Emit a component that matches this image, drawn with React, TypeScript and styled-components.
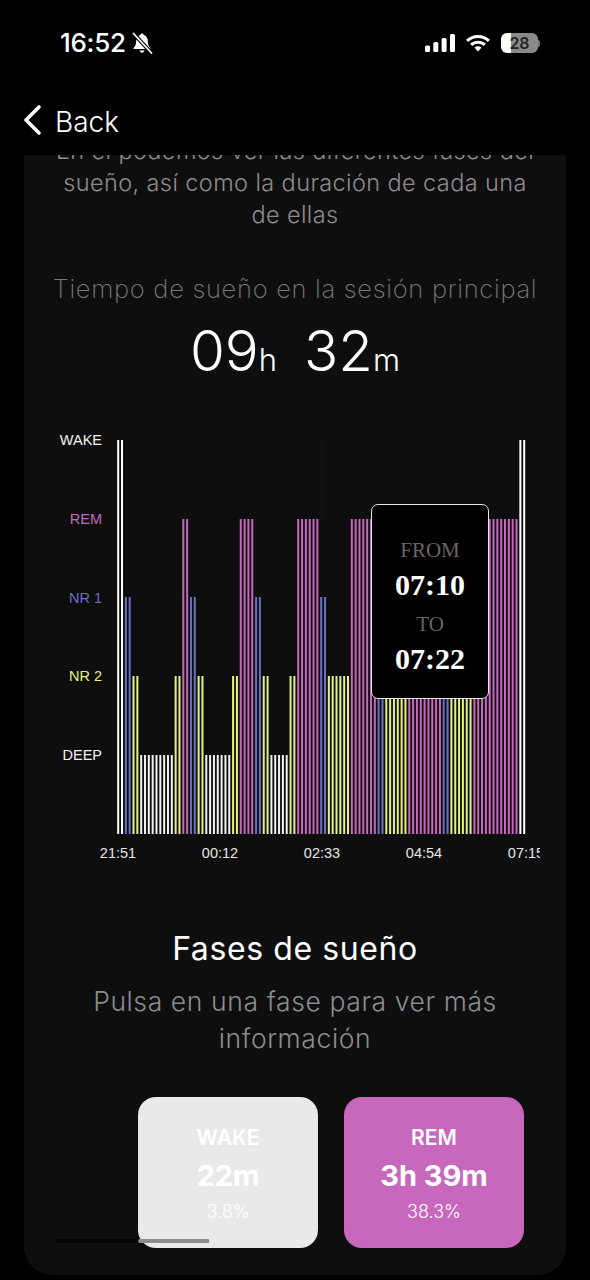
import React from 'react';
import styled, { createGlobalStyle } from 'styled-components';

const GlobalStyle = createGlobalStyle`
  html, body {
    margin: 0;
    padding: 0;
    background: #000;
  }
  body {
    font-family: Inter, "Noto Sans", sans-serif;
  }
`;

const Screen = styled.div`
  width: 590px;
  height: 1280px;
  background: #000;
  overflow: hidden;
  display: flex;
  flex-direction: column;
`;

const StatusBar = styled.div`
  height: 87px;
  flex: none;
  display: flex;
  justify-content: space-between;
  align-items: flex-start;
  padding: 27px 50px 0 60px;
  box-sizing: border-box;
  color: #fff;
`;

const Clock = styled.div`
  display: flex;
  align-items: center;
  gap: 4px;
  font-size: 26px;
  line-height: 32px;
  font-weight: 500;
  letter-spacing: -0.3px;
`;

const StatusIcons = styled.div`
  display: flex;
  align-items: center;
  gap: 10px;
  height: 32px;
`;

const Battery = styled.div`
  position: relative;
  width: 37px;
  height: 20px;
  border-radius: 6px;
  overflow: hidden;
  background: linear-gradient(to right, #fff 0 26%, #8a8a8a 26% 100%);
  color: #222;
  font-size: 16px;
  font-weight: 600;
  line-height: 20px;
  text-align: center;
`;

const BatteryTip = styled.div`
  width: 2px;
  height: 7px;
  margin-left: -10px;
  border-radius: 0 2px 2px 0;
  background: #777;
`;

const BackBar = styled.div`
  height: 68px;
  flex: none;
  display: flex;
  align-items: flex-start;
  gap: 12px;
  padding: 17px 0 0 23px;
  box-sizing: border-box;
  color: #fff;
  font-size: 28px;
  font-weight: 300;
  line-height: 36px;
`;

const Panel = styled.div`
  height: 1120px;
  flex: none;
  margin: 0 24px;
  background: #0e0e0f;
  border-radius: 0 0 28px 28px;
  overflow: hidden;
  position: relative;
`;

const Intro = styled.p`
  margin: -20px 0 0;
  padding: 0 24px;
  text-align: center;
  color: #8c8c8e;
  font-size: 23.5px;
  line-height: 32px;
  font-weight: 300;
  letter-spacing: 0.4px;
`;

const SessionTitle = styled.h2`
  margin: 42px 0 0;
  text-align: center;
  color: #7a7a7c;
  font-size: 25.5px;
  line-height: 32px;
  font-weight: 200;
  letter-spacing: 0.7px;
  white-space: nowrap;
`;

const Duration = styled.div`
  margin-top: 15px;
  display: flex;
  justify-content: center;
  align-items: baseline;
  gap: 27px;
  color: #fff;
  font-size: 56.5px;
  line-height: 62px;
  font-weight: 300;
`;

const Unit = styled.span`
  font-size: 31px;
`;

const ChartArea = styled.div`
  margin-top: 49px;
  display: grid;
  grid-template-columns: 78px 423px;
  column-gap: 15px;
`;

const YAxis = styled.div`
  height: 333px;
  margin-top: -9px;
  display: flex;
  flex-direction: column;
  justify-content: space-between;
  align-items: flex-end;
`;

const AxisLabel = styled.span<{ $color: string }>`
  color: ${(p) => p.$color};
  font-family: "Liberation Sans", Arial, sans-serif;
  font-size: 14.5px;
  line-height: 18px;
`;

const Plot = styled.div`
  position: relative;
  height: 395px;
`;

const Bars = styled.svg`
  display: block;
`;

const Tooltip = styled.div`
  position: absolute;
  left: 254px;
  top: 64px;
  width: 118px;
  height: 195px;
  box-sizing: border-box;
  padding-top: 29px;
  background: #000;
  border: 1.5px solid #e8e8e8;
  border-radius: 7px;
  display: flex;
  flex-direction: column;
  align-items: center;
  font-family: "Liberation Serif", "Times New Roman", serif;
`;

const TipLabel = styled.div`
  color: #666;
  font-size: 21px;
  line-height: 32px;
`;

const TipTime = styled.div`
  color: #fff;
  font-size: 30px;
  line-height: 38px;
  font-weight: 700;

  & + ${TipLabel} {
    margin-top: 4px;
  }
`;

const XAxis = styled.div`
  grid-column: 1 / 3;
  margin: 9px 0 0 43px;
  width: 473px;
  overflow: hidden;
  display: flex;
`;

const Tick = styled.span`
  flex: 0 0 102px;
  text-align: center;
  color: #e6e6e6;
  font-family: "Liberation Sans", Arial, sans-serif;
  font-size: 14.5px;
  line-height: 18px;
`;

const SectionTitle = styled.h3`
  margin: 67px 0 0;
  text-align: center;
  color: #fff;
  font-size: 32px;
  line-height: 40px;
  font-weight: 400;
  letter-spacing: 0.6px;
`;

const SectionHint = styled.p`
  margin: 14px 30px 0;
  text-align: center;
  color: #8c8c8e;
  font-size: 26.5px;
  line-height: 37px;
  font-weight: 300;
  letter-spacing: 0.6px;
`;

const CardRow = styled.div`
  margin-top: 40px;
  padding-left: 114px;
  display: flex;
  gap: 26px;
`;

const Card = styled.div<{ $bg: string }>`
  flex: 0 0 180px;
  height: 151px;
  border-radius: 18px;
  background: ${(p) => p.$bg};
  color: #fff;
  display: flex;
  flex-direction: column;
  align-items: center;
  padding-top: 27px;
  box-sizing: border-box;
`;

const CardName = styled.div`
  font-size: 21px;
  line-height: 28px;
  font-weight: 600;
`;

const CardValue = styled.div`
  font-size: 29px;
  line-height: 48px;
  font-weight: 700;
`;

const CardShare = styled.div`
  font-size: 18px;
  line-height: 24px;
  font-weight: 300;
`;

const ScrollTrack = styled.div`
  position: absolute;
  left: 31px;
  top: 1084px;
  width: 154px;
  height: 4px;
  border-radius: 2px;
  background: #060606;
`;

const ScrollThumb = styled.div`
  margin-left: 83px;
  width: 71px;
  height: 4px;
  border-radius: 2px;
  background: #8d8d8d;
`;

const COLORS = { wake: '#ffffff', rem: '#c768bd', nr1: '#6a6fc0', nr2: '#e4f283', deep: '#f2f2f2' };
const TOPS = { wake: 0, rem: 79, nr1: 157, nr2: 236, deep: 315 };

type Phase = keyof typeof COLORS;

const segments: [Phase, number][] = [
  ['wake', 2], ['nr1', 2], ['nr2', 2], ['deep', 9], ['nr2', 2], ['rem', 2], ['nr1', 2], ['nr2', 2],
  ['deep', 7], ['nr2', 2], ['rem', 4], ['nr1', 2], ['nr2', 2], ['deep', 5], ['nr2', 2], ['rem', 6],
  ['nr1', 2], ['nr2', 6], ['rem', 7], ['nr1', 2], ['nr2', 6], ['rem', 9], ['nr1', 2], ['nr2', 6],
  ['rem', 12], ['wake', 2],
];

const bars: Phase[] = segments.flatMap(([phase, count]) => Array<Phase>(count).fill(phase));

const SleepBars = () => (
  <Bars width={423} height={395} viewBox="0 0 423 395">
    <line x1={205} y1={0} x2={205} y2={80} stroke="#151617" />
    {bars.map((phase, i) => (
      <rect
        key={i}
        x={0.2 + i * 3.83}
        y={TOPS[phase]}
        width={2}
        height={394 - TOPS[phase]}
        fill={COLORS[phase]}
      />
    ))}
  </Bars>
);

const App = () => {
  return (
    <Screen>
      <GlobalStyle />
      <StatusBar>
        <Clock>
          16:52
          <svg width="24" height="24" viewBox="0 0 24 24" fill="#fff">
            <path d="M12 2.500c-1 0-1.600.7-1.700 1.500C7.600 4.800 6.200 7 6.200 10c0 4-1.200 5.500-2.600 7v1h16.800v-1c-1.400-1.500-2.600-3-2.600-7 0-3-1.400-5.200-4.100-6-.1-.8-.7-1.500-1.700-1.500z" />
            <path d="M9.500 19.500c.3 1.300 1.300 2.200 2.500 2.200s2.200-.9 2.500-2.200z" />
            <path d="M3.500 2.500 21.500 22" stroke="#000" strokeWidth="4" />
            <path d="M3.500 2.500 21.500 22" stroke="#fff" strokeWidth="1.800" strokeLinecap="round" />
          </svg>
        </Clock>
        <StatusIcons>
          <svg width="30" height="18" viewBox="0 0 30 18" fill="#fff">
            <rect x="0" y="11.500" width="5" height="6.500" rx="1.500" />
            <rect x="8.300" y="8" width="5" height="10" rx="1.500" />
            <rect x="16.600" y="4" width="5" height="14" rx="1.500" />
            <rect x="25" y="0" width="5" height="18" rx="1.500" />
          </svg>
          <svg width="26" height="18" viewBox="0 0 26 19" fill="none" stroke="#fff" strokeWidth="3.200">
            <path d="M1.500 7.200C7.800 1 18.200 1 24.500 7.200" />
            <path d="M5.800 11.500c4-3.800 10.400-3.800 14.400 0" />
            <path d="M13 18.500l-3.800-4.200c2.200-1.700 5.400-1.700 7.600 0z" fill="#fff" stroke="none" />
          </svg>
          <Battery>28</Battery>
          <BatteryTip />
        </StatusIcons>
      </StatusBar>
      <BackBar>
        <svg width="20" height="32" viewBox="0 0 20 32" fill="none" stroke="#fff" strokeWidth="3.600" strokeLinecap="round" strokeLinejoin="round">
          <path d="M16 3 3 16l13 13" />
        </svg>
        Back
      </BackBar>
      <Panel>
        <Intro>En él podemos ver las diferentes fases del sueño, así como la duración de cada una de ellas</Intro>
        <SessionTitle>Tiempo de sueño en la sesión principal</SessionTitle>
        <Duration>
          <span>09<Unit>h</Unit></span>
          <span>32<Unit>m</Unit></span>
        </Duration>
        <ChartArea>
          <YAxis>
            <AxisLabel $color="#f2f2f2">WAKE</AxisLabel>
            <AxisLabel $color={COLORS.rem}>REM</AxisLabel>
            <AxisLabel $color={COLORS.nr1}>NR 1</AxisLabel>
            <AxisLabel $color={COLORS.nr2}>NR 2</AxisLabel>
            <AxisLabel $color="#f2f2f2">DEEP</AxisLabel>
          </YAxis>
          <Plot>
            <SleepBars />
            <Tooltip>
              <TipLabel>FROM</TipLabel>
              <TipTime>07:10</TipTime>
              <TipLabel>TO</TipLabel>
              <TipTime>07:22</TipTime>
            </Tooltip>
          </Plot>
          <XAxis>
            <Tick>21:51</Tick>
            <Tick>00:12</Tick>
            <Tick>02:33</Tick>
            <Tick>04:54</Tick>
            <Tick>07:15</Tick>
          </XAxis>
        </ChartArea>
        <SectionTitle>Fases de sueño</SectionTitle>
        <SectionHint>Pulsa en una fase para ver más información</SectionHint>
        <CardRow>
          <Card $bg="#e9e9eb">
            <CardName>WAKE</CardName>
            <CardValue>22m</CardValue>
            <CardShare>3.8%</CardShare>
          </Card>
          <Card $bg="#c868bc">
            <CardName>REM</CardName>
            <CardValue>3h 39m</CardValue>
            <CardShare>38.3%</CardShare>
          </Card>
        </CardRow>
        <ScrollTrack>
          <ScrollThumb />
        </ScrollTrack>
      </Panel>
    </Screen>
  );
};

export default App;
